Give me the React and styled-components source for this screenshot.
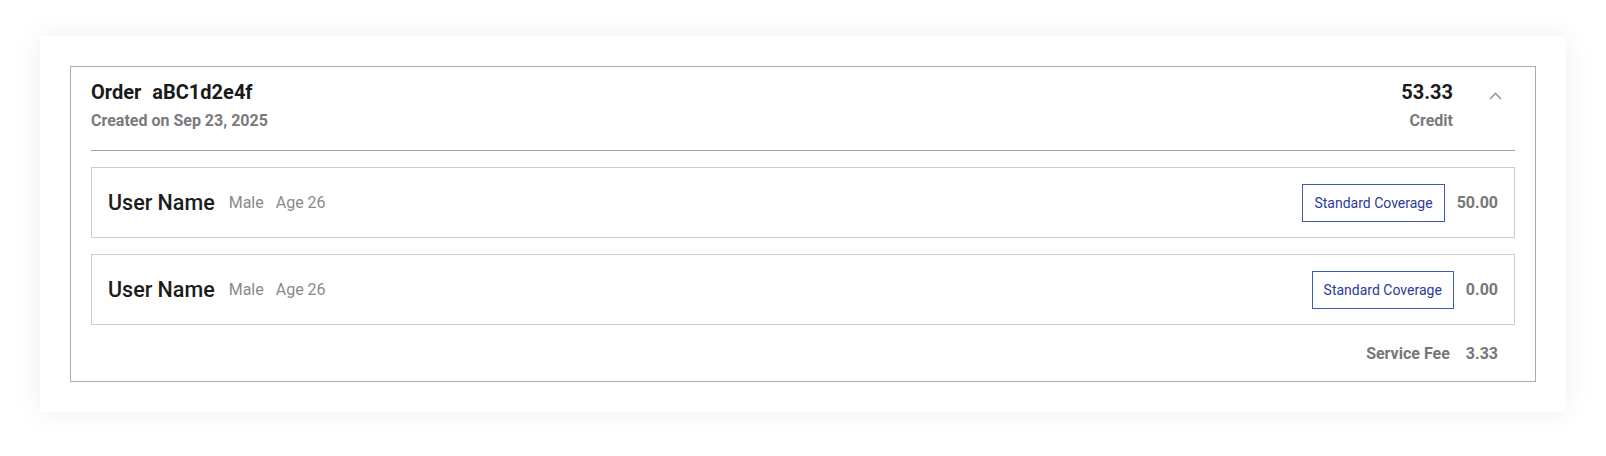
import React from "react";
import styled, { createGlobalStyle } from "styled-components";

const GlobalStyle = createGlobalStyle`
  html, body { margin: 0; padding: 0; background: #ffffff; }
  body { font-family: Roboto, "Noto Sans", "Liberation Sans", sans-serif; color: #1c1c1c; }
  * { box-sizing: border-box; }
`;

const Page = styled.div`
  padding: 36px 40px 44px 40px;
`;

const Card = styled.div`
  background: #fff;
  padding: 30px;
  box-shadow: 0 0 28px rgba(0, 0, 0, 0.07);
`;

const OrderBox = styled.section`
  border: 1px solid #ababab;
`;

const Header = styled.div`
  display: flex;
  align-items: flex-start;
  padding: 13px 20px 19px 20px;
`;

const HeaderMain = styled.div`
  flex: 1;
  display: flex;
  flex-direction: column;
`;

const TitleRow = styled.div`
  display: flex;
  gap: 11px;
  font-size: 20px;
  line-height: 24px;
  font-weight: 700;
  color: #1a1a1a;
`;

const SubText = styled.div`
  margin-top: 7px;
  font-size: 16px;
  line-height: 20px;
  font-weight: 700;
  color: #7a7a7a;
`;

const Total = styled.div`
  display: flex;
  flex-direction: column;
  align-items: flex-end;
  margin-right: 22px;
`;

const TotalValue = styled.div`
  font-size: 20px;
  line-height: 24px;
  font-weight: 700;
  color: #1a1a1a;
`;

const ToggleButton = styled.button`
  width: 40px;
  height: 32px;
  border: none;
  background: transparent;
  padding: 0;
  display: flex;
  align-items: center;
  justify-content: center;
  cursor: pointer;
`;

const Divider = styled.hr`
  margin: 0 20px;
  border: none;
  border-top: 1px solid #a5a5a5;
`;

const List = styled.div`
  display: flex;
  flex-direction: column;
  gap: 16px;
  padding: 16px 20px 0 20px;
`;

const PersonRow = styled.div`
  display: flex;
  align-items: center;
  min-height: 71px;
  border: 1px solid #cdcdcd;
  padding: 0 16px;
`;

const PersonName = styled.span`
  font-size: 21.5px;
  font-weight: 500;
  color: #1c1c1c;
  margin-right: 14px;
`;

const Meta = styled.span`
  font-size: 16px;
  color: #8a8a8a;
  margin-right: 12px;
`;

const Spacer = styled.div`
  flex: 1;
`;

const CoverageTag = styled.button`
  height: 38px;
  padding: 0 11px;
  border: 1px solid #4557b5;
  background: #fff;
  color: #2a3b97;
  font-family: Roboto, "Liberation Sans", sans-serif;
  font-size: 14px;
  margin-right: 12px;
`;

const Amount = styled.span`
  font-size: 16px;
  font-weight: 700;
  color: #777;
`;

const FeeRow = styled.div`
  display: flex;
  justify-content: flex-end;
  align-items: center;
  gap: 16px;
  padding: 17px 37px 15px 20px;
  line-height: 24px;
  font-size: 16px;
  font-weight: 700;
  color: #777;
`;

const people = [
  { name: "User Name", gender: "Male", age: 26, coverage: "Standard Coverage", amount: "50.00" },
  { name: "User Name", gender: "Male", age: 26, coverage: "Standard Coverage", amount: "0.00" },
];

export default function App() {
  return (
    <>
      <GlobalStyle />
      <Page>
        <Card>
          <OrderBox>
            <Header>
              <HeaderMain>
                <TitleRow>
                  <span>Order</span>
                  <span>aBC1d2e4f</span>
                </TitleRow>
                <SubText>Created on Sep 23, 2025</SubText>
              </HeaderMain>
              <Total>
                <TotalValue>53.33</TotalValue>
                <SubText>Credit</SubText>
              </Total>
              <ToggleButton aria-label="Collapse">
                <svg width="13" height="8" viewBox="0 0 13 8" fill="none">
                  <polyline points="1,7 6.5,1.5 12,7" stroke="#9a9a9a" strokeWidth="1.6" />
                </svg>
              </ToggleButton>
            </Header>
            <Divider />
            <List>
              {people.map((p, i) => (
                <PersonRow key={i}>
                  <PersonName>{p.name}</PersonName>
                  <Meta>{p.gender}</Meta>
                  <Meta>Age {p.age}</Meta>
                  <Spacer />
                  <CoverageTag>{p.coverage}</CoverageTag>
                  <Amount>{p.amount}</Amount>
                </PersonRow>
              ))}
            </List>
            <FeeRow>
              <span>Service Fee</span>
              <span>3.33</span>
            </FeeRow>
          </OrderBox>
        </Card>
      </Page>
    </>
  );
}
